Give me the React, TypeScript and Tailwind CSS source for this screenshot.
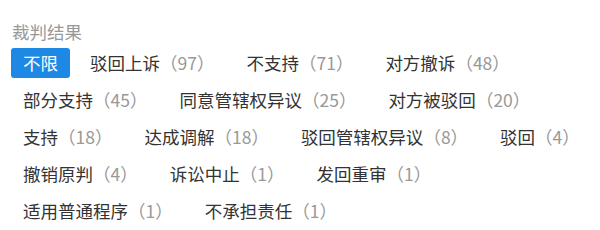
import { useState } from "react";

const results = [
  { name: "不限" },
  { name: "驳回上诉", count: 97 },
  { name: "不支持", count: 71 },
  { name: "对方撤诉", count: 48 },
  { name: "部分支持", count: 45 },
  { name: "同意管辖权异议", count: 25 },
  { name: "对方被驳回", count: 20 },
  { name: "支持", count: 18 },
  { name: "达成调解", count: 18 },
  { name: "驳回管辖权异议", count: 8 },
  { name: "驳回", count: 4 },
  { name: "撤销原判", count: 4 },
  { name: "诉讼中止", count: 1 },
  { name: "发回重审", count: 1 },
  { name: "适用普通程序", count: 1 },
  { name: "不承担责任", count: 1 },
];

export default function App() {
  const [active, setActive] = useState("不限");

  return (
    <div className="w-[600px] h-[230px] bg-white pl-[11px] pt-5 font-['Noto_Sans_CJK_SC','Noto_Sans',sans-serif]">
      <h3 className="text-[17.5px] leading-6 text-[#999999] pl-px mb-1">裁判结果</h3>

      <div className="flex flex-wrap gap-x-2 gap-y-[7px]">
        {results.map((item) => {
          const selected = item.name === active;
          return (
            <button
              key={item.name}
              onClick={() => setActive(item.name)}
              className={
                selected
                  ? "h-[30px] px-3 rounded-[3px] bg-[#1e88e5] text-white text-[17.5px] leading-[30px]"
                  : "h-[30px] px-3 rounded-[3px] text-[#333333] text-[17.5px] leading-[30px]"
              }
            >
              {item.name}
              {item.count !== undefined && (
                <span className="text-[#999999]">（{item.count}）</span>
              )}
            </button>
          );
        })}
      </div>
    </div>
  );
}
